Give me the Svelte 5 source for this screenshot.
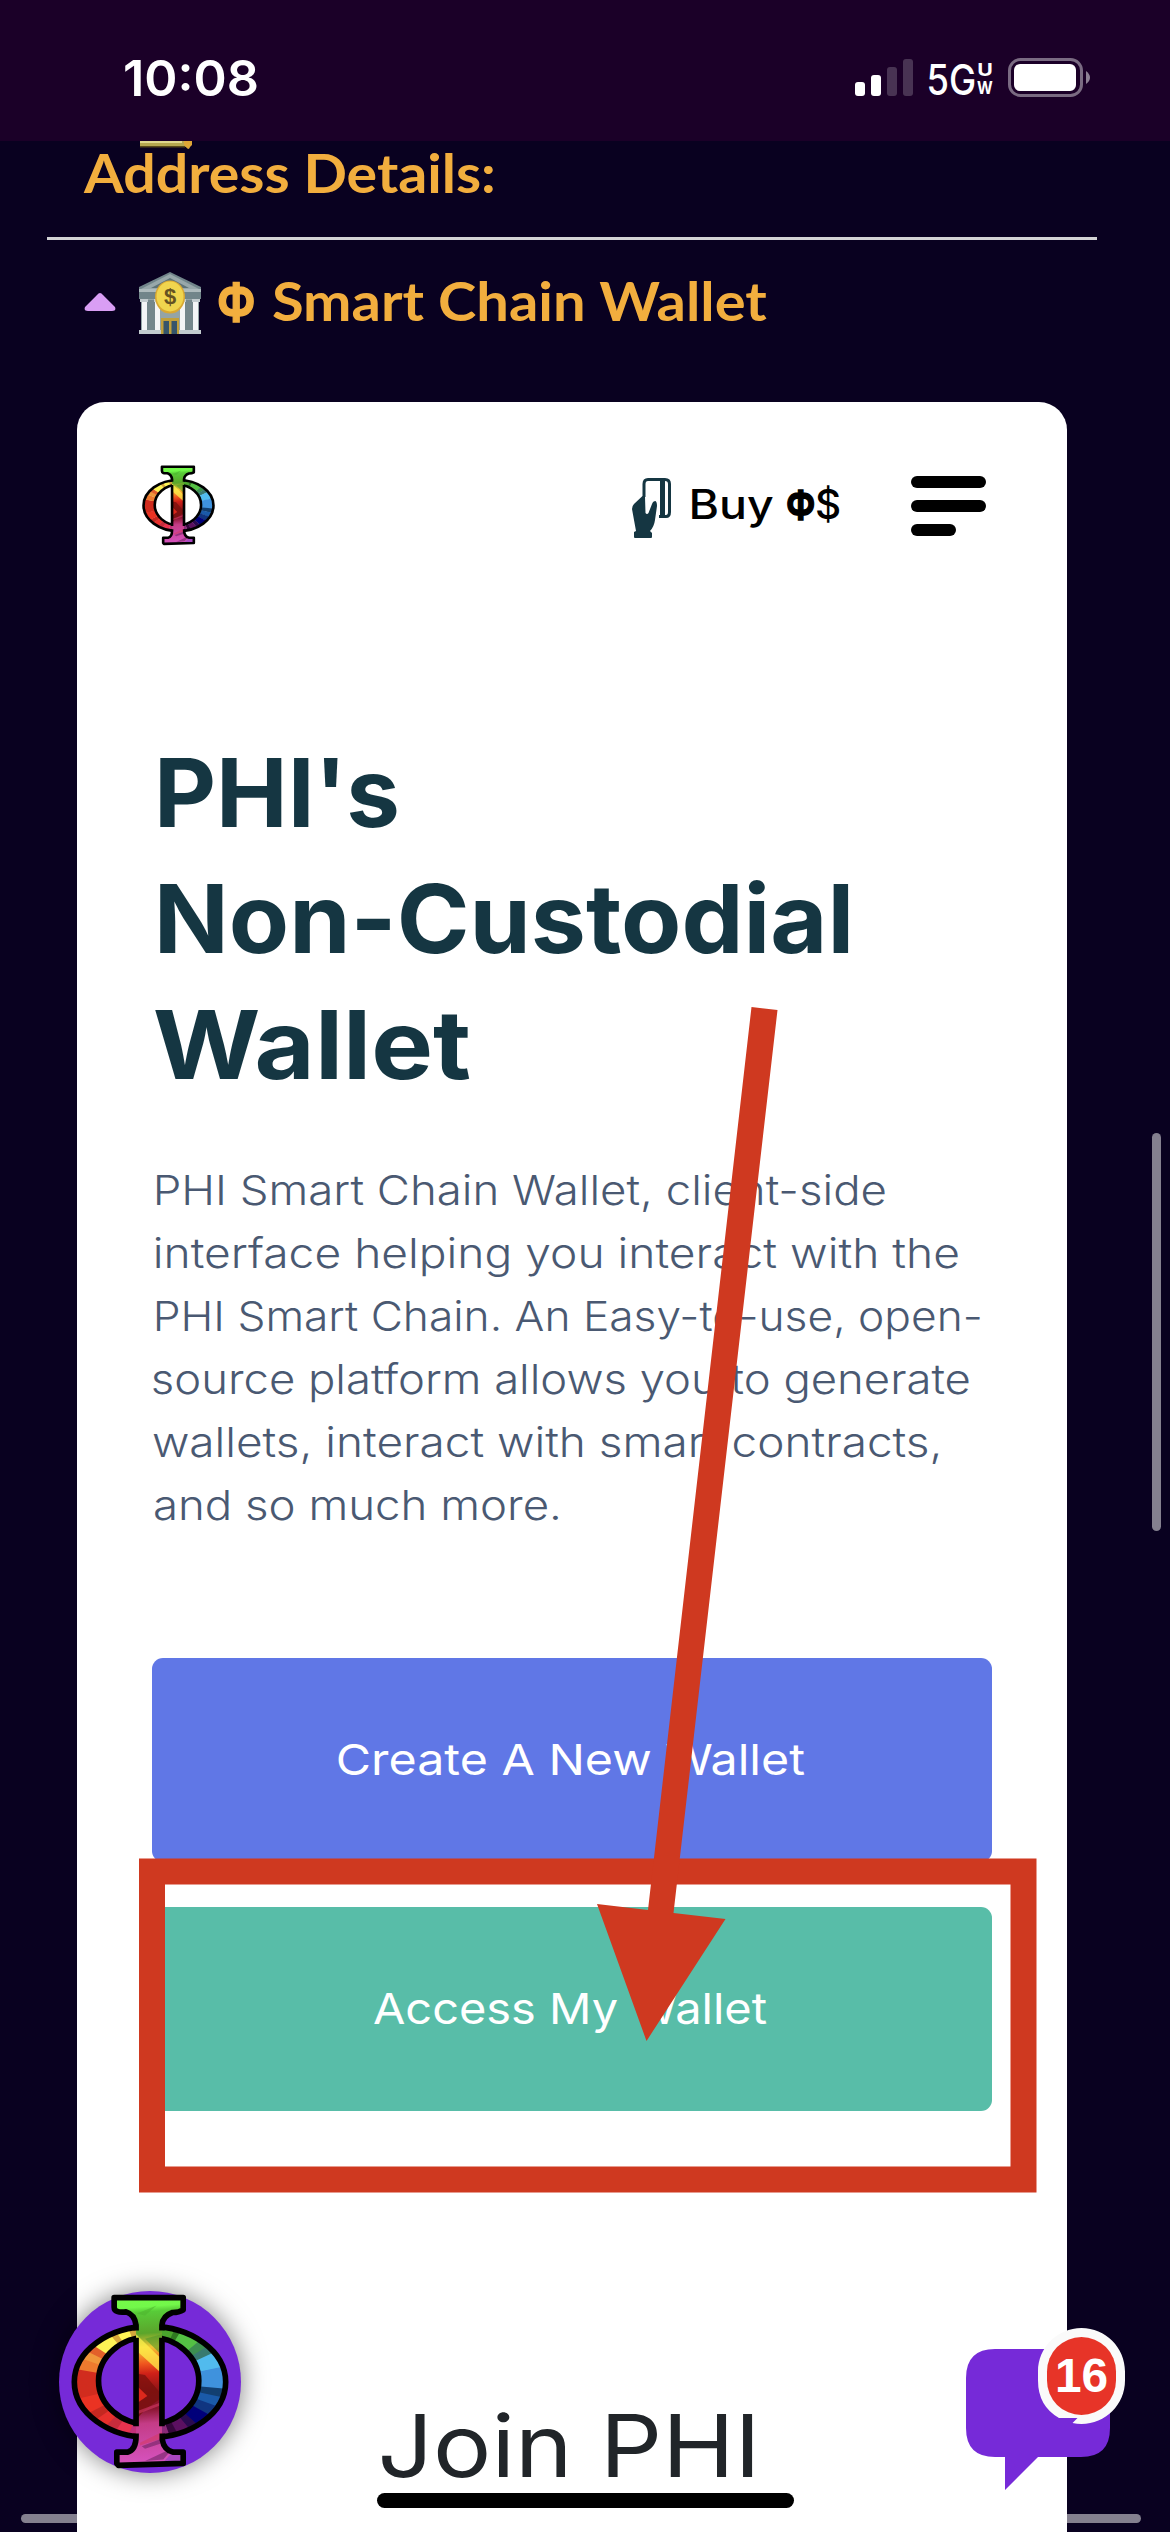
<script>
  const paragraph = [
    { text: 'PHI Smart Chain Wallet, client-side', inset: 4, width: 729 },
    { text: 'interface helping you interact with the', inset: 3, width: 803 },
    { text: 'PHI Smart Chain. An Easy-to-use, open-', inset: 4, width: 824 },
    { text: 'source platform allows you to generate', inset: 1, width: 816 },
    { text: 'wallets, interact with smart contracts,', inset: 1, width: 785.5 },
    { text: 'and so much more.', inset: 2, width: 404 }
  ];
  const title = [
    { text: "PHI's", inset: 8, width: 236.5 },
    { text: 'Non-Custodial', inset: 8, width: 688 },
    { text: 'Wallet', inset: 3, width: 315 }
  ];

  // Colour stops of the rainbow ring: [end angle in degrees, colour], clockwise from the top.
  const stops = [
    [-65, '#4aa52c'], [-59, '#2f7a20'], [-40, '#54c144'], [-32, '#3d8f50'], [-25, '#387a70'],
    [-12, '#51bbee'], [5, '#3f92dd'], [12, '#123f70'], [20, '#1a5aa8'], [29, '#103580'],
    [42, '#00007a'], [50, '#2a0a50'], [62, '#5b1060'], [70, '#36063c'], [90, '#8a2a78'],
    [104, '#e84fb8'], [112, '#c2307a'], [125, '#e8334e'], [135, '#c62c3c'], [145, '#e8302c'],
    [153, '#c52820'], [167, '#ea3323'], [190, '#d12c1e'], [199, '#ee7a2e'], [206, '#f0973a'],
    [213, '#e2602a'], [230, '#fdf455'], [236, '#d8a83a'], [248, '#fff655'], [256, '#d3a63c'],
    [270, '#fbee4e']
  ];
  const wedges = stops.map(([end, fill], i) => {
    const start = i ? stops[i - 1][0] : -90;
    const at = (d) => {
      const r = (d * Math.PI) / 180;
      return `${(360 + 420 * Math.cos(r)).toFixed(1)},${(366 + 420 * Math.sin(r)).toFixed(1)}`;
    };
    return { fill, points: `360,366 ${at(start)} ${at(end + 0.6)}` };
  });

  // Stretches a line so that its ink starts at `inset` and spans `width` pixels.
  function fit(node, { inset = 0, width }) {
    const style = getComputedStyle(node);
    const ctx = document.createElement('canvas').getContext('2d');
    ctx.font = `${style.fontWeight} ${style.fontSize} ${style.fontFamily}`;
    const m = ctx.measureText(node.textContent.trim());
    const k = width / (m.actualBoundingBoxRight + m.actualBoundingBoxLeft);
    node.style.transform = `translateX(${inset + m.actualBoundingBoxLeft * k}px) scaleX(${k})`;
  }
</script>

{#snippet phi(id)}
  <svg class="phi" viewBox="122 100 476 532" preserveAspectRatio="none" aria-label="PHI">
    <defs>
      <clipPath id={'ring' + id}>
        <path clip-rule="evenodd" d="M132 366a228 168 0 1 0 456 0a228 168 0 1 0-456 0zM205 362a151 132 0 1 0 302 0a151 132 0 1 0-302 0z" />
      </clipPath>
      <clipPath id={'stem' + id}>
        <path d="M252 111H460V150Q448 160 428 158Q400 166 396 196V530Q402 570 430 578H460V612L450 618H262V578H292Q314 572 318 540V196Q314 162 288 156Q252 158 252 140Z" />
      </clipPath>
      <linearGradient id={'g' + id} x1="0" y1="100" x2="40" y2="632" gradientUnits="userSpaceOnUse">
        <stop offset="0" stop-color="#78ff46" /><stop offset=".12" stop-color="#72f84a" />
        <stop offset=".15" stop-color="#58cb38" /><stop offset=".27" stop-color="#5ba52b" />
        <stop offset=".35" stop-color="#f3c534" /><stop offset=".44" stop-color="#f0581e" />
        <stop offset=".5" stop-color="#cf2018" /><stop offset=".6" stop-color="#8e1518" />
        <stop offset=".7" stop-color="#8b1530" /><stop offset=".78" stop-color="#c43c86" />
        <stop offset="1" stop-color="#d552bd" />
      </linearGradient>
    </defs>
    <g clip-path={`url(#ring${id})`}>
      {#each wedges as w}<polygon points={w.points} fill={w.fill} />{/each}
    </g>
    <g fill="none" stroke="#000" stroke-width="17">
      <ellipse cx="360" cy="366" rx="228" ry="168" />
      <ellipse cx="356" cy="362" rx="151" ry="132" />
    </g>
    <g clip-path={`url(#stem${id})`}>
      <path d="M240 100H480V632H240Z" fill={`url(#g${id})`} />
      <path d="M318 222L400 302V345L318 270Z" fill="#fff04b" opacity=".75" />
      <path d="M318 340L345 345L400 410L345 450L318 480Z" fill="#78100c" opacity=".75" />
      <path d="M318 375L352 408L318 432Z" fill="#dc281c" />
      <path d="M400 220V290L345 235Z" fill="#4f9a2b" opacity=".6" />
      <path d="M318 455L400 425V433L318 465ZM330 550L400 515V535L330 558Z" fill="#d43b66" opacity=".6" />
      <path d="M335 560L400 535V550L345 568ZM345 605L430 565L400 600Z" fill="#68215f" opacity=".55" />
      <path d="M320 160L380 135L345 165Z" fill="#4fb52f" opacity=".6" />
      <path d="M430 575H470V620H390Z" fill="#a948c0" />
    </g>
    <path d="M318 210V194Q314 162 288 154Q252 158 252 140V111H460V148Q448 156 428 156Q398 166 396 194V210M396 232V500M318 232V500M318 522V530Q318 572 292 578H260V612L265 618L460 612V578H430Q402 572 397 540V522" fill="none" stroke="#000" stroke-width="17" stroke-linejoin="round" />
  </svg>
{/snippet}

<div class="screen">
  <header class="status">
    <time><span class="line" use:fit={{ width: 132 }}>10:08</span></time>
    <div class="indicators">
      <svg width="58" height="38" viewBox="0 0 58 38" fill="#fff">
        <rect y="23" width="10" height="14" rx="3" /><rect x="16" y="16" width="10" height="21" rx="3" />
        <rect x="32" y="8" width="10" height="29" rx="3" opacity=".2" /><rect x="48" width="10" height="37" rx="3" opacity=".2" />
      </svg>
      <div class="network">
        <span class="gen"><span class="line" use:fit={{ width: 45 }}>5G</span></span>
        <span class="band"><i><span class="line" use:fit={{ inset: 1.5, width: 13 }}>U</span></i><i><span class="line" use:fit={{ width: 16 }}>W</span></i></span>
      </div>
      <svg width="83" height="39" viewBox="0 0 83 39">
        <rect x="1.5" y="1.5" width="72" height="36" rx="11" fill="none" stroke="#fff" stroke-opacity=".42" stroke-width="3" />
        <rect x="6" y="6" width="62" height="27" rx="6" fill="#fff" />
        <path d="M78 13Q82 16 82 19.500T78 26Z" fill="#fff" opacity=".5" />
      </svg>
    </div>
  </header>

  <div class="above">
    <svg width="53" height="8" viewBox="0 0 53 8">
      <path d="M0 0H52L49 8L45 5.500H0Z" fill="#b5a74f" /><path d="M0 0H42V2H0Z" fill="#dfd78c" /><path d="M0 5H45V6.500H0Z" fill="#574719" /><path d="M44 0H52V4L48 8L44 4Z" fill="#dda536" />
    </svg>
  </div>
  <h3><span class="line" use:fit={{ width: 410 }}>Address Details:</span></h3>
  <hr />
  <div class="toggle">
    <svg class="caret" width="32" height="18" viewBox="0 0 32 18"><path d="M16 0Q17.500 0 19 2L31 14Q32.500 18 28 18H4Q-.5 18 1 14L13 2Q14.500 0 16 0Z" fill="#d99ef4" /></svg>
    <svg class="bank" width="62" height="62" viewBox="0 0 62 62">
      <path d="M31 0L62 15V27H0V15Z" fill="#71858a" /><path d="M31 2L60 17H2Z" fill="#98a8aa" /><path d="M31 6L50 16H12Z" fill="#5e7378" />
      <path d="M0 17H62V20H0Z" fill="#aebbbd" /><path d="M2 27H60V58H2Z" fill="#94a4a6" /><path d="M8 28H16V58H8ZM46 28H54V58H46Z" fill="#75878b" />
      <g fill="#f4f5f6"><path d="M3 29H8V58H3ZM16 29H21V58H16ZM41 29H46V58H41ZM54 29H59V58H54Z" /></g>
      <path d="M1 27H9V30H1ZM15 27H22V30H15ZM40 27H47V30H40ZM53 27H61V30H53ZM0 58H62V62H0Z" fill="#c2cbce" />
      <path d="M22 46H40V62H22Z" fill="#c0a03b" /><path d="M24.500 49H30V62H24.500ZM32.500 49H38V62H32.500Z" fill="#35556b" />
      <ellipse cx="31" cy="25" rx="15" ry="16.500" fill="#d9a832" /><ellipse cx="31" cy="24.500" rx="13.500" ry="15" fill="#f0d54e" />
      <text x="31" y="32" text-anchor="middle" font-family="Liberation Sans" font-size="22" font-weight="700" fill="#645222">$</text>
    </svg>
    <h3 class="sym"><span class="line" use:fit={{ inset: 1, width: 35 }}>Φ</span></h3>
    <h3><span class="line" use:fit={{ width: 494.5 }}>Smart Chain Wallet</span></h3>
  </div>

  <main class="card">
    <nav>
      <div class="brand">{@render phi('a')}</div>
      <svg class="hand" width="40" height="60" viewBox="0 0 40 60">
        <path d="M12 19V6Q12 1.500 16 1.500H33Q37.500 1.500 37.500 6V34Q37.500 38.500 34 38.500H27" fill="none" stroke="#153642" stroke-width="3" />
        <path d="M28 2H33V38H28Z" fill="#153642" />
        <path d="M10.500 18L13 19L13.500 35Q15 37 16.500 35L20 26Q21 23 23.500 23Q25 24 25 28L23 42Q22 49 18 53L20 55V59Q20 60 19 60H3Q2 60 2 59V54L4 53L0 31Q0 28 2 26Z" fill="#153642" />
      </svg>
      <span class="buy"><b><span class="line" use:fit={{ width: 81.5 }}>Buy</span></b><b><span class="line strong" use:fit={{ inset: 1, width: 26.5 }}>Φ</span></b><b><span class="line" use:fit={{ width: 23 }}>$</span></b></span>
      <div class="menu"><i></i><i></i><i></i></div>
    </nav>

    <h1>{#each title as l}<span class="line" use:fit={l}>{l.text}</span>{/each}</h1>
    <p>{#each paragraph as l}<span class="line" use:fit={l}>{l.text}</span>{/each}</p>

    <button class="create"><span class="line" use:fit={{ inset: 186, width: 467 }}>Create A New Wallet</span></button>
    <button class="access"><span class="line" use:fit={{ inset: 222, width: 393 }}>Access My Wallet</span></button>

    <h2><span class="line" use:fit={{ width: 370.5 }}>Join PHI</span></h2>
  </main>

  <svg class="marks" width="1170" height="2532" viewBox="0 0 1170 2532" fill="#cf3920">
    <path fill-rule="evenodd" d="M139 1858.500H1036.500V2192.500H139ZM165 1884.500V2166.500H1010.500V1884.500Z" />
    <path d="M751.500 1007L777.500 1010L673.500 1913L725.500 1919L646.500 2041L597 1904L648 1910Z" />
  </svg>

  <div class="vscroll"></div>
  <div class="hscroll left"></div>
  <div class="hscroll right"></div>
  <div class="home"></div>

  <div class="bubble">{@render phi('b')}</div>
  <div class="chat">
    <svg width="160" height="164" viewBox="0 0 160 164">
      <path d="M29 21H115Q144 21 144 50V100Q144 129 115 129H72L39 162V129H29Q0 129 0 100V50Q0 21 29 21Z" fill="#762ad8" />
      <path d="M115.500 0C139.500 0 159 19.500 159 43.500V52.500C159 76.500 139.500 96 115.500 96Q111 96 106.500 95L111.500 90H93Q72 78 72 52.500V43.500C72 19.500 91.500 0 115.500 0Z" fill="#fafafa" />
      <rect x="81" y="9" width="69" height="78" rx="34.500" fill="#e73428" />
    </svg>
    <span class="count"><span class="line" use:fit={{ width: 48.5 }}>16</span></span>
  </div>
</div>

<style>
  :global(body) { margin: 0; background: #090120; }
  .screen { position: relative; width: 1170px; height: 2532px; overflow: hidden; background: #090120; font-family: Inter, "Liberation Sans", sans-serif; }
  h1, h2, h3, p { margin: 0; }
  svg { display: block; flex: none; }
  .line { display: block; width: max-content; white-space: pre; transform-origin: 0 50%; }

  .status { height: 141px; box-sizing: border-box; padding: 0 79px 0 125px; display: flex; justify-content: space-between; align-items: flex-start; background: #1b0028; color: #fff; }
  time { padding-top: 48px; font-size: 50px; line-height: 60px; font-weight: 600; }
  .indicators { display: flex; padding-top: 58px; }
  .indicators > svg:first-child { margin: 1px 16px 0 0; }
  .network { display: flex; width: 79px; }
  .gen { width: 48px; font-size: 42px; line-height: 43px; font-weight: 500; }
  .band { display: flex; flex-direction: column; gap: 0; padding-top: 3px; font-size: 18px; line-height: 18px; font-weight: 700; }
  .band i { font-style: normal; }

  .above { height: 8px; padding-left: 140px; }
  h3 { font-family: Lato, "Open Sans", sans-serif; font-size: 53px; line-height: 60px; font-weight: 700; color: #f2ae3e; }
  .screen > h3 { padding: 0 0 0 83px; margin-top: -6px; height: 60px; }
  hr { margin: 34px 73px 0 47px; height: 3px; border: 0; background: #d3d3d5; }
  .toggle { display: flex; height: 62px; padding: 32px 0 0 84px; }
  .caret { margin: 21px 23px 0 0; }
  .bank { margin-right: 17px; }
  .toggle h3 { margin-top: -1px; }
  .toggle .sym { width: 55px; font-family: "Open Sans", "Noto Sans", sans-serif; font-size: 53px; margin-top: -1px; -webkit-text-stroke: 1.500px #f2ae3e; }

  .card { margin: 68px 0 0 77px; box-sizing: border-box; width: 990px; height: 2130px; padding: 63px 75px 0; border-radius: 28px 28px 0 0; background: #fff; }
  nav { display: flex; height: 82px; margin-left: -10px; }
  .brand { width: 73px; height: 81px; margin-right: 417px; }
  .phi { width: 100%; height: 100%; }
  .hand { margin: 13px 20px 0 0; }
  .buy { display: grid; grid-template-columns: 94px 31px 94px; color: #000; font-size: 40.500px; line-height: 50px; padding-top: 15px; }
  .buy b { font-weight: 500; }
  .buy .strong { font-weight: 700; font-family: "Open Sans", "Noto Sans", sans-serif; -webkit-text-stroke: 1.500px #000; }
  .menu { display: flex; flex-direction: column; gap: 12px; padding-top: 11px; }
  .menu i { width: 75px; height: 12px; border-radius: 6px; background: #000; }
  .menu i:last-child { width: 45px; }

  h1 { margin-top: 182px; font-size: 95.500px; line-height: 126px; font-weight: 700; color: #153642; }
  p { margin-top: 52px; font-size: 41px; line-height: 63px; font-weight: 300; color: #4a5972; }
  button { display: block; width: 840px; height: 204px; margin: 0; padding: 0 0 2px; border: 0; border-radius: 11px; color: #fff; text-align: left; font: 400 43px/60px Inter, "Liberation Sans", sans-serif; }
  .create { margin-top: 121px; background: #6077e6; }
  .access { margin-top: 45px; background: #58bda8; }
  h2 { margin: 285px 0 0 230px; font-size: 87px; line-height: 100px; font-weight: 400; color: #212529; }

  .marks { position: absolute; inset: 0; }
  .vscroll { position: absolute; left: 1152px; top: 1133px; width: 9px; height: 398px; border-radius: 5px; background: #84808f; }
  .hscroll { position: absolute; top: 2514px; height: 9px; background: #84808f; }
  .left { left: 21px; width: 56px; border-radius: 5px 0 0 5px; }
  .right { left: 1067px; width: 74px; border-radius: 0 5px 5px 0; }
  .home { position: absolute; left: 377px; top: 2493px; width: 417px; height: 15px; border-radius: 8px; background: #000; }
  .bubble { position: absolute; left: 59px; top: 2291px; width: 182px; height: 182px; box-sizing: border-box; padding: 3px 12px; border-radius: 50%; background: #762ad8; box-shadow: 0 0 26px rgba(0, 0, 0, .5); }
  .chat { position: absolute; left: 966px; top: 2328px; }
  .count { position: absolute; left: 92px; top: 20px; color: #fff; font: 700 48px/56px "Liberation Sans", sans-serif; }
</style>
